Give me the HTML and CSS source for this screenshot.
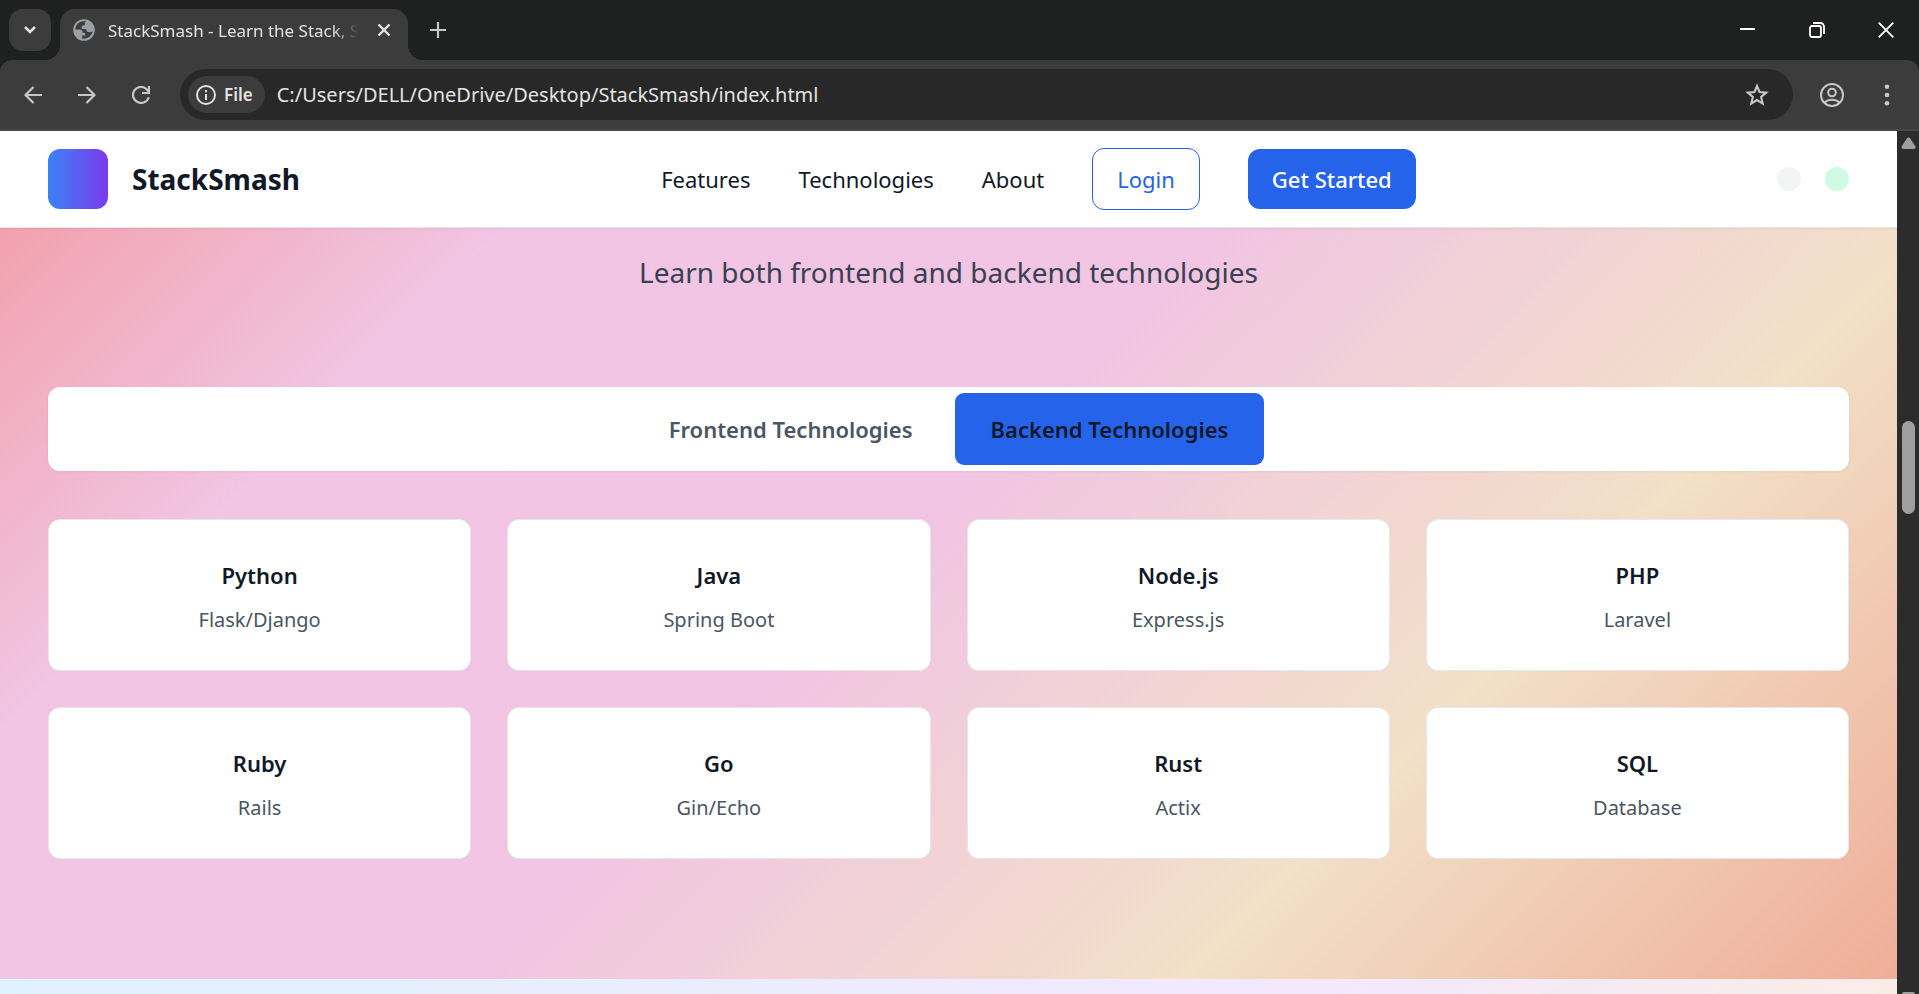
FILE: index.html
```html
<!DOCTYPE html>
<html lang="en">
<head>
<meta charset="utf-8">
<title>StackSmash - Learn the Stack, Smash the Code</title>
<link rel="stylesheet" href="styles.css">
</head>
<body>
<div class="browser">
  <div class="tabstrip">
    <button class="tab-search" aria-label="Search tabs">
      <svg width="14" height="10" viewBox="0 0 14 10"><path d="M2 2l5 5 5-5" fill="none" stroke="#e3e3e3" stroke-width="2.6"/></svg>
    </button>
    <div class="tab">
      <svg class="favicon" width="22" height="22" viewBox="0 0 22 22">
        <circle cx="11" cy="11" r="10.8" fill="#9aa0a6"/>
        <path d="M2.300 10.500H6.500c2 0 3.200 1.100 3.200 3.200h1.300c.8 0 1.300.5 1.300 1.300v1.600H9.200v2.900c5.200.9 9.700-2.700 10.500-7.200-.9.700-2 1-3.300 1-2.100 0-3.300-1.100-3.300-3.200H8.700V8.300c0-1.200.9-2.100 2.100-2.100h1V4.900c0-1 .5-1.900 1.300-2.300C7.700 1.300 2.500 5 2.300 10.500z" fill="#3c3c3c"/>
        <path d="M3 9.500C4 5.500 7 3.200 10.500 2.600L9.500 5 6.800 6.500v3z" fill="#3c3c3c"/>
      </svg>
      <span class="tab-title">StackSmash - Learn the Stack, S</span>
      <button class="plain" aria-label="Close tab">
        <svg width="14" height="14" viewBox="0 0 14 14"><path d="M1.500 1.500l11 11M12.500 1.500l-11 11" stroke="#e3e3e3" stroke-width="2.400"/></svg>
      </button>
    </div>
    <button class="plain new-tab" aria-label="New tab">
      <svg width="16" height="16" viewBox="0 0 16 16"><path d="M8 0v16M0 8h16" stroke="#c7c7c7" stroke-width="2.200"/></svg>
    </button>
    <div class="window-controls">
      <button class="plain" aria-label="Minimize"><svg width="16" height="16" viewBox="0 0 16 16"><path d="M0 7h15" stroke="#fff" stroke-width="2"/></svg></button>
      <button class="plain" aria-label="Restore"><svg width="16" height="16" viewBox="0 0 16 16"><rect x="1" y="4" width="11" height="11" rx="2" fill="none" stroke="#fff" stroke-width="1.800"/><path d="M4 1h7.500A3.500 3.500 0 0 1 15 4.500V12" fill="none" stroke="#fff" stroke-width="1.800"/></svg></button>
      <button class="plain" aria-label="Close"><svg width="16" height="16" viewBox="0 0 16 16"><path d="M.7.700l14.600 14.600M15.300.700L.7 15.300" stroke="#fff" stroke-width="1.800"/></svg></button>
    </div>
  </div>

  <div class="toolbar">
    <button class="plain" aria-label="Back"><svg width="18" height="18" viewBox="0 0 18 18"><path d="M18 9H1.500M9.500 1L1.500 9l8 8" fill="none" stroke="#c7c7c7" stroke-width="2.200"/></svg></button>
    <button class="plain" aria-label="Forward"><svg width="18" height="18" viewBox="0 0 18 18"><path d="M0 9h16.500M8.500 1l8 8-8 8" fill="none" stroke="#c7c7c7" stroke-width="2.200"/></svg></button>
    <button class="plain" aria-label="Reload"><svg width="18" height="18" viewBox="0 0 18 18"><path d="M16.700 11.200A8 8 0 1 1 14.800 3.400L16.800 5.500M17 0v7h-7" fill="none" stroke="#c7c7c7" stroke-width="2.200"/></svg></button>
    <div class="omnibox">
      <button class="chip">
        <svg width="20" height="20" viewBox="0 0 20 20"><circle cx="10" cy="10" r="9" fill="none" stroke="#e3e3e3" stroke-width="1.900"/><path d="M10 9v6M10 5v2.200" stroke="#e3e3e3" stroke-width="2"/></svg>
        <span>File</span>
      </button>
      <input class="url" type="text" aria-label="Address" value="C:/Users/DELL/OneDrive/Desktop/StackSmash/index.html">
      <button class="plain" aria-label="Bookmark this tab"><svg width="24" height="24" viewBox="0 0 24 24"><path d="M12 3l2.500 6 6.700.6-5.100 4.300 1.600 6.700L12 17.100l-5.700 3.500 1.600-6.700-5.100-4.300L9.500 9z" fill="none" stroke="#c7c7c7" stroke-width="2.100"/></svg></button>
    </div>
    <button class="plain profile" aria-label="Profile"><svg width="24" height="24" viewBox="0 0 24 24"><g fill="none" stroke="#c7c7c7" stroke-width="2"><circle cx="12" cy="12" r="11"/><circle cx="12" cy="9.500" r="3.800"/><path d="M4.500 19.500c4-3.600 11-3.600 15 0"/></g></svg></button>
    <button class="plain menu" aria-label="Menu"><svg width="6" height="22" viewBox="0 0 6 22" fill="#c7c7c7"><circle cx="3" cy="2.700" r="2.300"/><circle cx="3" cy="11" r="2.300"/><circle cx="3" cy="19.300" r="2.300"/></svg></button>
  </div>

  <div class="viewport">
    <div class="page">
      <header class="header">
        <div class="brand"><span class="logo"></span><span class="brand-name">StackSmash</span></div>
        <nav class="nav">
          <a class="link" href="#features">Features</a>
          <a class="link" href="#technologies">Technologies</a>
          <a class="link" href="#about">About</a>
          <a class="link login" href="#login">Login</a>
          <a class="link start" href="#start">Get Started</a>
        </nav>
        <div class="dots"><span class="dot"></span><span class="dot dot-green"></span></div>
      </header>
      <main>
        <section class="tech" id="technologies">
          <p class="lead">Learn both frontend and backend technologies</p>
          <div class="tabs">
            <button class="tech-tab">Frontend Technologies</button>
            <button class="tech-tab tech-tab-active">Backend Technologies</button>
          </div>
          <div class="grid">
            <article class="card"><h3 class="name">Python</h3><p class="stack">Flask/Django</p></article>
            <article class="card"><h3 class="name">Java</h3><p class="stack">Spring Boot</p></article>
            <article class="card"><h3 class="name">Node.js</h3><p class="stack">Express.js</p></article>
            <article class="card"><h3 class="name">PHP</h3><p class="stack">Laravel</p></article>
            <article class="card"><h3 class="name">Ruby</h3><p class="stack">Rails</p></article>
            <article class="card"><h3 class="name">Go</h3><p class="stack">Gin/Echo</p></article>
            <article class="card"><h3 class="name">Rust</h3><p class="stack">Actix</p></article>
            <article class="card"><h3 class="name">SQL</h3><p class="stack">Database</p></article>
          </div>
        </section>
        <section class="next" id="about"></section>
      </main>
    </div>
    <div class="scrollbar">
      <svg width="15" height="12" viewBox="0 0 15 12"><path d="M7.500 2.500L12.500 10h-10z" fill="#9f9f9f" stroke="#9f9f9f" stroke-width="4" stroke-linejoin="round"/></svg>
      <div class="track"><span class="thumb"></span></div>
      <span class="scroll-down"></span>
    </div>
  </div>
</div>
</body>
</html>
```
FILE: styles.css
```css
* { box-sizing: border-box; }

body {
  margin: 0;
  font-family: "Segoe UI", "Noto Sans", "Open Sans", sans-serif;
  color: #111827;
}

h3, p { margin: 0; }

button, input { font: inherit; color: inherit; }

svg { display: block; flex: none; }

.browser {
  display: flex;
  flex-direction: column;
  height: 100vh;
  overflow: hidden;
  background: #1f2120;
}

.plain {
  display: flex;
  align-items: center;
  justify-content: center;
  padding: 0;
  border: 0;
  background: none;
}

/* Tab strip */
.tabstrip {
  display: flex;
  align-items: center;
  height: 60px;
  padding-left: 9px;
}

.tab-search {
  display: flex;
  align-items: center;
  justify-content: center;
  width: 42px;
  height: 42px;
  padding: 0;
  border: 0;
  border-radius: 14px;
  background: #3c3c3c;
}

.tab {
  position: relative;
  display: flex;
  align-items: center;
  gap: 13px;
  align-self: flex-end;
  width: 348px;
  height: 51px;
  margin-left: 9px;
  padding: 0 17px 9px 13px;
  border-radius: 15px 15px 0 0;
  background: #3c3c3c;
}

.tab::before,
.tab::after {
  content: "";
  position: absolute;
  bottom: 0;
  width: 15px;
  height: 15px;
}

.tab::before {
  right: 100%;
  background: radial-gradient(circle at 0 0, transparent 15px, #3c3c3c 15px);
}

.tab::after {
  left: 100%;
  background: radial-gradient(circle at 100% 0, transparent 15px, #3c3c3c 15px);
}

.tab-title {
  flex: 1;
  overflow: hidden;
  padding-top: 2px;
  color: #e3e3e3;
  font-size: 17px;
  line-height: 24px;
  white-space: nowrap;
  mask-image: linear-gradient(to right, #000 calc(100% - 32px), transparent calc(100% - 6px));
}

.new-tab { margin-left: 22px; }

.window-controls {
  display: flex;
  gap: 53px;
  margin-left: auto;
  padding-right: 25px;
}

/* Toolbar */
.toolbar {
  display: flex;
  align-items: center;
  height: 71px;
  padding: 0 29px 0 24px;
  gap: 36px;
  border-bottom: 2px solid #484848;
  border-radius: 12px 12px 0 0;
  background: #3c3c3c;
}

.omnibox {
  display: flex;
  flex: 1;
  align-items: center;
  gap: 12px;
  height: 51px;
  margin-left: -6px;
  padding: 0 24px 0 8px;
  border-radius: 26px;
  background: #282828;
}

.chip {
  display: flex;
  align-items: center;
  gap: 8px;
  height: 37px;
  padding: 0 12px 0 8px;
  border: 0;
  border-radius: 19px;
  background: #3c3c3c;
  color: #e3e3e3;
  font-size: 17px;
  font-weight: 600;
}

.url {
  flex: 1;
  min-width: 0;
  padding: 0;
  border: 0;
  outline: 0;
  background: none;
  color: #e3e3e3;
  font-size: 20px;
}

.profile { margin-left: -9px; }

.menu { margin-left: 4px; }

/* Page area */
.viewport {
  display: flex;
  flex: 1;
  min-height: 0;
}

.page {
  display: flex;
  flex: 1;
  flex-direction: column;
  overflow: hidden;
  background: #fff;
}

.header {
  position: relative;
  display: flex;
  flex: none;
  align-items: center;
  justify-content: space-between;
  height: 97px;
  padding: 0 48px;
  border-bottom: 1px solid #e5e7eb;
  background: #fff;
  box-shadow: 0 1px 3px rgba(0, 0, 0, 0.05);
}

.brand {
  display: flex;
  align-items: center;
  gap: 24px;
}

.logo {
  width: 60px;
  height: 60px;
  border-radius: 12px;
  background: linear-gradient(90deg, #3b82f6, #7c3aed);
}

.brand-name {
  font-size: 28px;
  font-weight: 700;
}

.nav {
  display: flex;
  align-items: center;
  gap: 48px;
}

.link {
  color: #111827;
  font-size: 22px;
  line-height: 36px;
  text-decoration: none;
}

.login {
  padding: 12px 24px;
  border: 1px solid #2563eb;
  border-radius: 12px;
  color: #2563eb;
}

.start {
  padding: 12px 24px;
  border-radius: 12px;
  background: #2563eb;
  color: #fff;
  font-weight: 500;
}

.dots {
  display: flex;
  gap: 24px;
}

.dot {
  width: 24px;
  height: 24px;
  border-radius: 50%;
  background: #f3f4f6;
}

.dot-green { background: #d1fae5; }

/* The gradient runs on upward beneath the header */
.tech {
  padding: 20px 48px 120px;
  background:
    linear-gradient(rgba(0, 0, 0, 0.05), rgba(0, 0, 0, 0.05)),
    linear-gradient(135deg, #ff9a9e 0%, #fecfef 25%, #fecfef 50%, #ffecd2 75%, #fcb69f 100%) bottom / 100% calc(100% + 212px) no-repeat;
}

.lead {
  color: #374151;
  font-size: 28px;
  line-height: 48px;
  text-align: center;
}

.tabs {
  display: flex;
  justify-content: center;
  gap: 6px;
  margin: 91px 0 48px;
  padding: 6px;
  border-radius: 12px;
  background: #fff;
  box-shadow: 0 1px 3px rgba(0, 0, 0, 0.05);
}

.tech-tab {
  height: 72px;
  padding: 0 36px;
  border: 0;
  border-radius: 9px;
  background: none;
  color: #4b5563;
  font-size: 22px;
  font-weight: 600;
}

.tech-tab-active {
  background: #2563eb;
  color: #111827;
}

.grid {
  display: grid;
  grid-template-columns: repeat(4, 1fr);
  gap: 36px;
}

.card {
  padding: 36px;
  border: 1px solid #e5e7eb;
  border-radius: 12px;
  background: #fff;
  text-align: center;
}

.name {
  margin-bottom: 12px;
  font-size: 22px;
  font-weight: 600;
  line-height: 38px;
}

.stack {
  color: #4b5563;
  font-size: 20px;
  line-height: 28px;
}

.next {
  height: 730px;
  background: linear-gradient(135deg, #e0f2fe 0%, #f3e8ff 50%, #fef3c7 100%);
}

/* Scrollbar */
.scrollbar {
  display: flex;
  flex-direction: column;
  align-items: center;
  width: 22px;
  padding-top: 6px;
  background: #2c2c2c;
}

.track {
  flex: 1;
  padding-top: 272px;
}

.thumb {
  display: block;
  width: 13px;
  height: 93px;
  border-radius: 7px;
  background: #9f9f9f;
}

.scroll-down {
  width: 13px;
  height: 2px;
  border-radius: 2px 2px 0 0;
  background: #9f9f9f;
}
```
